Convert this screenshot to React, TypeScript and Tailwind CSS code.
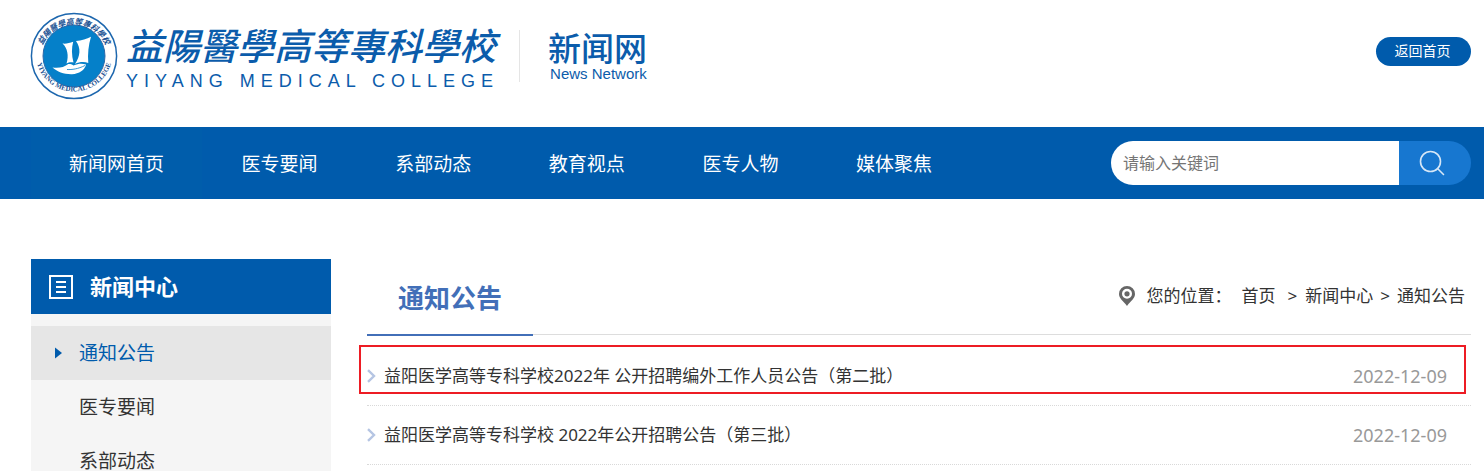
import React from "react";

const NAV = ["新闻网首页", "医专要闻", "系部动态", "教育视点", "医专人物", "媒体聚焦"];
const SECTIONS = ["通知公告", "医专要闻", "系部动态"];
const NOTICES = [
  { title: "益阳医学高等专科学校2022年 公开招聘编外工作人员公告（第二批）", date: "2022-12-09", marked: true },
  { title: "益阳医学高等专科学校 2022年公开招聘公告（第三批）", date: "2022-12-09", marked: false },
];

function Seal() {
  return (
    <svg viewBox="0 0 88 88" className="size-[88px] shrink-0" aria-label="校徽" role="img">
      <defs>
        <path id="seal-top" d="M9.5 47 A34.5 34.5 0 0 1 78.5 47" />
        <path id="seal-bottom" d="M5.5 41 A38.5 38.5 0 0 0 82.5 41" />
      </defs>
      <circle cx="44" cy="44" r="42.6" fill="#fff" stroke="#1d67ae" strokeWidth="1.5" />
      <circle cx="44" cy="44" r="31" fill="#0580c9" stroke="#2a68a8" strokeWidth="1" />
      <g fill="#fff">
        <path d="M32.5 31.5 C36 32 39.5 31 43.2 29.8 C41.500 36 41.500 43 43.5 50.5 C40.500 50 38.500 50.500 36.5 51.5 C39 44 37.500 36 32.5 31.5Z" />
        <path d="M46 29 C51.500 28.800 57 27 61 24.800 C58.500 33 57.500 42 58.300 51 C54 49.500 49.500 49.800 45 52 C50.500 44 51 36 46 29Z" />
        <path d="M22.500 55.500 C29 56.500 34.500 55 37.500 52.500 C39 51.800 41 52 43.500 53.500 C48 51.500 52 51 56 52.500 C55 58 49 62 42 62.200 C34 62.400 27.500 60 22.500 55.500Z" />
      </g>
      <path d="M37 57.500 C42 57.800 48 57 55 53.500" fill="none" stroke="#0580c9" strokeWidth="0.800" />
      <text fill="#174f91" fontSize="8" fontWeight="700" fontStyle="italic" fontFamily="'Noto Sans CJK TC', sans-serif">
        <textPath href="#seal-top" startOffset="50%" textAnchor="middle">益陽醫學高等專科學校</textPath>
      </text>
      <text fill="#174f91" fontSize="7" fontWeight="700" fontFamily="'Liberation Serif', serif">
        <textPath href="#seal-bottom" startOffset="50%" textAnchor="middle">YIYANG MEDICAL COLLEGE</textPath>
      </text>
    </svg>
  );
}

function Brand() {
  return (
    <a href="#" className="flex items-center text-[#0b5cab]">
      <Seal />
      <span className="ml-2 flex flex-col">
        <span className="font-['Noto_Sans_CJK_TC',sans-serif] text-[37px] leading-[46px] font-medium italic">
          益陽醫學高等專科學校
        </span>
        <span className="pt-1 font-['Liberation_Sans',sans-serif] text-[18px] leading-5 tracking-[6px]">
          YIYANG MEDICAL COLLEGE
        </span>
      </span>
    </a>
  );
}

function Pin() {
  return (
    <svg viewBox="0 0 16 20" className="h-5 w-4" aria-hidden="true">
      <path fillRule="evenodd" fill="#666" d="M8 0a8 8 0 0 1 8 8c0 4.500-4 6.500-8 12C4 14.500 0 12.500 0 8a8 8 0 0 1 8-8Zm0 2.800a5 5 0 1 0 0 10 5 5 0 0 0 0-10Z" />
      <circle cx="8" cy="7.800" r="2.600" fill="#666" />
    </svg>
  );
}

export default function App() {
  return (
    <div className="h-screen overflow-hidden bg-white font-['Noto_Sans','Noto_Sans_CJK_SC',sans-serif] text-[#333]">
      <header className="flex h-[127px] items-start justify-between pr-[13px] pl-[30px]">
        <div className="flex items-center pt-3">
          <Brand />
          <div className="ml-5 h-[52px] border-l border-[#e5e5e5]" />
          <a href="#" className="ml-7 flex flex-col gap-0.5 text-[#0b5cab]">
            <span className="font-['Noto_Sans_CJK_SC',sans-serif] text-[33px] leading-[34px] font-medium">新闻网</span>
            <span className="pl-0.5 font-['Liberation_Sans',sans-serif] text-[15px] leading-4">News Network</span>
          </a>
        </div>
        <a href="#" className="mt-[37px] flex h-[29px] w-[95px] items-center justify-center rounded-full bg-[#005bac] pr-0.5 pb-0.5 text-sm text-white">
          返回首页
        </a>
      </header>

      <nav className="flex h-[72px] items-center justify-between bg-[#005bac] pr-[13px] pl-[31px]">
        <ul className="flex w-[939px] justify-between text-[19px] text-white">
          {NAV.map((item, i) => (
            <li key={item}>
              <a href="#" className={`flex h-[72px] items-center px-[38px] pt-0.5 ${i === 0 ? "bg-[#005dab]" : ""}`}>
                {item}
              </a>
            </li>
          ))}
        </ul>
        <form className="flex h-11 w-[360px] overflow-hidden rounded-full" onSubmit={(e) => e.preventDefault()}>
          <input
            type="text"
            aria-label="请输入关键词"
            placeholder="请输入关键词"
            className="min-w-0 flex-1 bg-white px-3 text-base outline-none placeholder:text-[#757575]"
          />
          <button type="submit" aria-label="搜索" className="flex w-[72px] items-center bg-[#1777d0] pl-5">
            <svg viewBox="0 0 26 26" className="size-[26px]" fill="none" stroke="#d6e7f7" strokeWidth="1.600" strokeLinecap="round">
              <circle cx="11.500" cy="11.500" r="10" />
              <path d="M18.500 18.500 24.500 24.500" />
            </svg>
          </button>
        </form>
      </nav>

      <main className="flex gap-9 pt-[60px] pr-[13px] pl-[31px]">
        <aside className="w-[300px] shrink-0">
          <h2 className="flex h-[55px] items-center bg-[#005bac] pl-[18px] text-[22px] font-bold text-white">
            <svg viewBox="0 0 24 24" className="mr-[17px] size-6" fill="none" stroke="#fff" aria-hidden="true">
              <rect x="1" y="1" width="22" height="22" strokeWidth="2" />
              <path d="M7 7h10M7 12h10M7 17h10" strokeWidth="2" />
            </svg>
            新闻中心
          </h2>
          <ul className="bg-[#f5f5f5] py-3 text-[19px]">
            {SECTIONS.map((item, i) => (
              <li key={item}>
                <a
                  href="#"
                  className={`flex h-[54px] items-center pl-6 ${i === 0 ? "bg-[#e6e6e6] text-[#005bac]" : ""}`}
                >
                  <span className="w-6">
                    {i === 0 && (
                      <svg viewBox="0 0 7 12" className="h-3 w-[7px]" fill="#005bac" aria-hidden="true">
                        <path d="M0 .5 7 6 0 11.500Z" />
                      </svg>
                    )}
                  </span>
                  {item}
                </a>
              </li>
            ))}
          </ul>
        </aside>

        <section className="min-w-0 flex-1">
          <div className="flex h-[76px] items-stretch justify-between border-b border-[#ddd]">
            <h1 className="-mb-[2px] flex items-center border-b-2 border-[#426fb8] px-[31px] pt-1 text-[26px] font-bold text-[#426fb8]">
              通知公告
            </h1>
            <div className="flex items-center pr-1.5 pb-0.5 text-[17px]">
              <Pin />
              <span className="ml-3">您的位置：</span>
              <a href="#" className="ml-2.5">首页</a>
              <span className="ml-3 mr-2">&gt;</span>
              <a href="#">新闻中心</a>
              <span className="mx-[7px]">&gt;</span>
              <a href="#">通知公告</a>
            </div>
          </div>
          <ul className="pt-3">
            {NOTICES.map((n) => (
              <li key={n.title} className="relative flex h-[59px] items-center border-b border-dotted border-[#d9d9d9] pr-6">
                {n.marked && <div className="pointer-events-none absolute -top-0.5 right-[5px] -left-2 h-[49px] border-2 border-[#ed1c24]" />}
                <svg viewBox="0 0 9 14" className="h-3.5 w-[9px]" fill="none" stroke="#b5c5e3" strokeWidth="2.400" aria-hidden="true">
                  <path d="M1 1.200 7 7 1 12.800" />
                </svg>
                <a href="#" className="ml-2 flex-1 text-[17px]">{n.title}</a>
                <time className="text-lg text-[#999]">{n.date}</time>
              </li>
            ))}
          </ul>
        </section>
      </main>
    </div>
  );
}
